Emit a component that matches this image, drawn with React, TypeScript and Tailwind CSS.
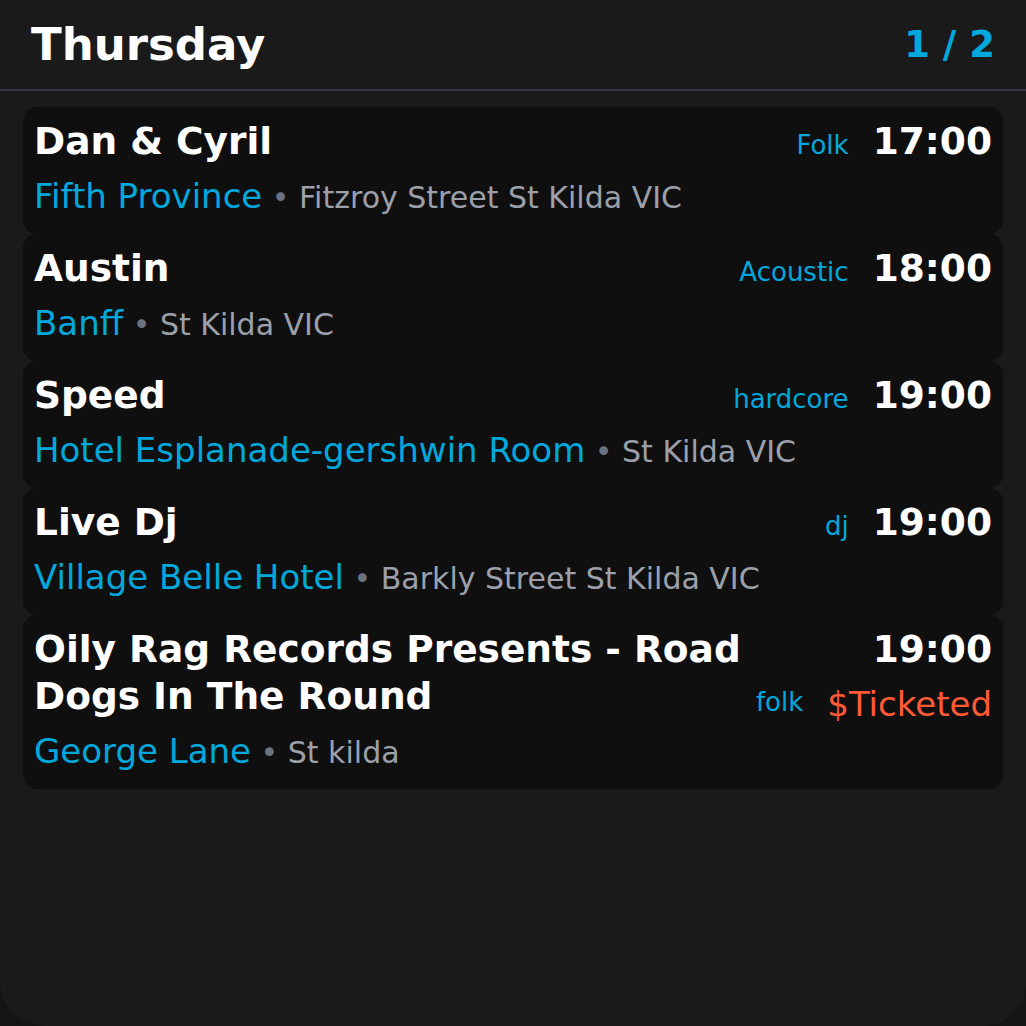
import React from "react";

type Gig = {
  title: string;
  venue: string;
  address: string;
  genre: string;
  time: string;
  price?: string;
};

const gigs: Gig[] = [
  { title: "Dan & Cyril", venue: "Fifth Province", address: "Fitzroy Street St Kilda VIC", genre: "Folk", time: "17:00" },
  { title: "Austin", venue: "Banff", address: "St Kilda VIC", genre: "Acoustic", time: "18:00" },
  { title: "Speed", venue: "Hotel Esplanade-gershwin Room", address: "St Kilda VIC", genre: "hardcore", time: "19:00" },
  { title: "Live Dj", venue: "Village Belle Hotel", address: "Barkly Street St Kilda VIC", genre: "dj", time: "19:00" },
  {
    title: "Oily Rag Records Presents - Road Dogs In The Round",
    venue: "George Lane",
    address: "St kilda",
    genre: "folk",
    time: "19:00",
    price: "$Ticketed",
  },
];

const GigCard: React.FC<{ gig: Gig }> = ({ gig }) => {
  return (
    <div className="bg-[#0f0f0f] rounded-[14px] px-[11px] pt-[11px] pb-4">
      <div className="flex items-start gap-3">
        <h2 className="flex-1 min-w-0 text-white font-bold text-[37.5px] leading-[47px]">
          {gig.title}
        </h2>
        {gig.price ? (
          <div className="flex flex-col items-end shrink-0">
            <span className="text-white font-bold text-[37.5px] leading-[47px]">{gig.time}</span>
            <div className="flex items-center gap-6 mt-[15px] h-[32px]">
              <span className="text-[#00a8dc] text-[26px] leading-[30px] mb-1">{gig.genre}</span>
              <span className="text-[#ff5a36] text-[34px] leading-[32px]">{gig.price}</span>
            </div>
          </div>
        ) : (
          <div className="flex items-baseline gap-6 shrink-0 h-[47px]">
            <span className="text-[#00a8dc] text-[26px] leading-none">{gig.genre}</span>
            <span className="text-white font-bold text-[37.5px] leading-[47px]">{gig.time}</span>
          </div>
        )}
      </div>
      <div className="mt-[11px] whitespace-nowrap overflow-hidden text-[34px] leading-[40px]">
        <span className="text-[#00a8dc]">{gig.venue}</span>
        <span className="text-[30px] text-[#6b7280]"> • </span>
        <span className="text-[30px] text-[#9ca0aa]">{gig.address}</span>
      </div>
    </div>
  );
};

const App: React.FC = () => {
  return (
    <div className="bg-[#151515] min-h-screen">
      <div
        className="h-[1026px] bg-[#1a1a1a] rounded-b-[44px] overflow-hidden"
        style={{ fontFamily: '"DejaVu Sans", "Liberation Sans", sans-serif' }}
      >
        {/* Header */}
        <div className="h-[91px] flex items-center justify-between px-[31px] border-b-2 border-[#30343d]">
          <h1 className="text-white font-bold text-[45px] leading-none">Thursday</h1>
          <span className="text-[#00a8dc] font-bold text-[37px] leading-none">1 / 2</span>
        </div>

        {/* Gig list */}
        <div className="px-[23px] pt-4 flex flex-col">
          {gigs.map((gig, i) => (
            <GigCard key={i} gig={gig} />
          ))}
        </div>
      </div>
    </div>
  );
};

export default App;
